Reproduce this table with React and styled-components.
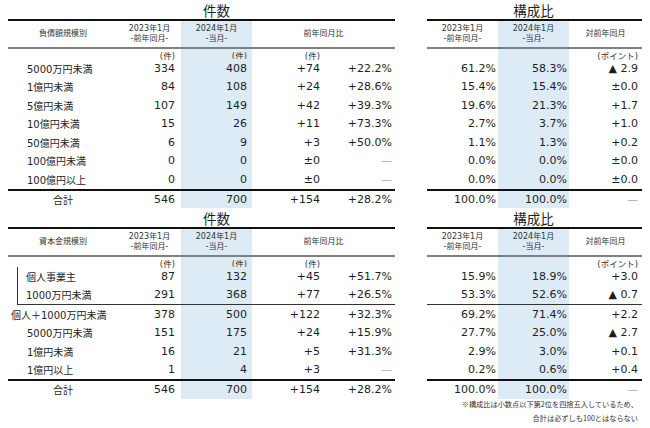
import styled, { createGlobalStyle } from 'styled-components';

const GlobalStyle = createGlobalStyle`
  body {
    margin: 0;
    background: #fff;
    font-family: "DejaVu Sans", "Noto Sans CJK JP", sans-serif;
    color: #1e1e1e;
  }
`;

const HL = '#ddebf7';

const Page = styled.div`
  width: 650px;
  padding-left: 8px;
  box-sizing: border-box;
`;

const Section = styled.div`
  display: flex;
  gap: 32px;
`;

const Table = styled.div`
  display: flex;
  flex-direction: column;
`;

const Row = styled.div`
  display: grid;
  grid-template-columns: ${p => p.$cols};
  height: ${p => p.$h}px;
`;

const TitleRow = styled(Row)`
  height: 19px;
`;

const HeaderRow = styled(Row)`
  height: 26px;
  border-top: 2px solid #111;
  border-bottom: 2px solid #808080;
`;

const TotalRow = styled(Row)`
  height: 17.5px;
  border-top: 2px solid #111;
`;

const Group = styled.div`
  margin-left: ${p => p.$indent}px;
  border-left: ${p => (p.$indent ? '1px solid #333' : 'none')};
  border-bottom: 1px solid #333;
`;

const Cell = styled.div`
  display: flex;
  align-items: center;
  justify-content: ${p =>
    p.$align === 'left' ? 'flex-start' : p.$align === 'center' ? 'center' : 'flex-end'};
  padding-right: ${p => p.$pr || 0}px;
  padding-left: ${p => p.$pl || 0}px;
  background: ${p => (p.$hl ? HL : 'transparent')};
  grid-column: ${p => (p.$span ? `span ${p.$span}` : 'auto')};
  white-space: nowrap;
  font-size: 11px;
  color: ${p => (p.$dash ? '#a8a8a8' : '#1e1e1e')};
`;

const Label = styled(Cell)`
  font-size: 10px;
`;

const Title = styled(Cell)`
  font-size: 13.5px;
  align-items: flex-start;
  padding-top: 4px;
  line-height: 15px;
  color: #1e1e1e;
`;

const HeadCell = styled(Cell)`
  flex-direction: column;
  justify-content: center;
  align-items: center;
  font-size: 8px;
  line-height: 10px;
  color: #333;
`;

const Unit = styled(Cell)`
  font-size: 8.5px;
  color: #333;
`;

const Note = styled.div`
  display: flex;
  flex-direction: column;
  align-items: flex-end;
  gap: 4px;
  padding-right: 4px;
  font-size: 7.2px;
  line-height: 10px;
  color: #333;
  font-family: "Noto Sans CJK JP", sans-serif;
`;

const LEFT = { cols: [110, 63, 71, 71, 72], pads: [0, 6, 5, 3, 3], hl: 2 };
const RIGHT = { cols: [71, 71, 73], pads: [2, 2, 4], hl: 1 };

const colsOf = (spec, shrink = 0) =>
  spec.cols.map((w, i) => `${i === 0 ? w - shrink : w}px`).join(' ');

const DataRow = ({ spec, label, values, indent = 0, shrink = 0 }) => {
  const offset = spec === LEFT ? 1 : 0;
  return (
    <Row $cols={colsOf(spec, shrink)} $h={18.5}>
      {spec === LEFT && (
        <Label $align="left" $pl={indent}>
          {label}
        </Label>
      )}
      {values.map((v, i) => (
        <Cell
          key={i}
          $pr={spec.pads[i + offset]}
          $hl={i + offset === spec.hl}
          $dash={v === '—'}
        >
          {v}
        </Cell>
      ))}
    </Row>
  );
};

const LeftTable = ({ head, rows, group, total }) => {
  const cols = colsOf(LEFT);
  return (
    <Table>
      <TitleRow $cols={cols}>
        <Cell />
        <Cell />
        <Title $align="center">件数</Title>
      </TitleRow>
      <HeaderRow $cols={cols}>
        <HeadCell>{head}</HeadCell>
        <HeadCell>
          <span>2023年1月</span>
          <span>-前年同月-</span>
        </HeadCell>
        <HeadCell $hl>
          <span>2024年1月</span>
          <span>-当月-</span>
        </HeadCell>
        <HeadCell $span={2}>前年同月比</HeadCell>
      </HeaderRow>
      <Row $cols={cols} $h={10}>
        <Cell />
        <Unit $pr={6}>(件)</Unit>
        <Unit $pr={5} $hl>(件)</Unit>
        <Unit $pr={3}>(件)</Unit>
        <Cell />
      </Row>
      {group && (
        <Group $indent={9}>
          {group.map(r => (
            <DataRow key={r[0]} spec={LEFT} label={r[0]} values={r.slice(1)} indent={8} shrink={10} />
          ))}
        </Group>
      )}
      {rows.map(r => (
        <DataRow key={r[0]} spec={LEFT} label={r[0]} values={r.slice(1)} indent={r[0].startsWith('個人＋') ? 3 : 19} />
      ))}
      <TotalRow $cols={cols}>
        <Label $align="center">合計</Label>
        {total.map((v, i) => (
          <Cell key={i} $pr={LEFT.pads[i + 1]} $hl={i + 1 === LEFT.hl}>
            {v}
          </Cell>
        ))}
      </TotalRow>
    </Table>
  );
};

const RightTable = ({ rows, group, total, note }) => {
  const cols = colsOf(RIGHT);
  return (
    <Table>
      <TitleRow $cols={cols}>
        <Cell />
        <Title $align="center">構成比</Title>
        <Cell />
      </TitleRow>
      <HeaderRow $cols={cols}>
        <HeadCell>
          <span>2023年1月</span>
          <span>-前年同月-</span>
        </HeadCell>
        <HeadCell $hl>
          <span>2024年1月</span>
          <span>-当月-</span>
        </HeadCell>
        <HeadCell>対前年同月</HeadCell>
      </HeaderRow>
      <Row $cols={cols} $h={10}>
        <Cell />
        <Cell $hl />
        <Unit $pr={4}>(ポイント)</Unit>
      </Row>
      {group && (
        <Group $indent={0}>
          {group.map((r, i) => (
            <DataRow key={i} spec={RIGHT} values={r} />
          ))}
        </Group>
      )}
      {rows.map((r, i) => (
        <DataRow key={i} spec={RIGHT} values={r} />
      ))}
      <TotalRow $cols={cols}>
        {total.map((v, i) => (
          <Cell key={i} $pr={RIGHT.pads[i]} $hl={i === RIGHT.hl} $dash={v === '—'}>
            {v}
          </Cell>
        ))}
      </TotalRow>
      {note && (
        <Note>
          <span>※構成比は小数点以下第2位を四捨五入しているため、</span>
          <span>合計は必ずしも100とはならない</span>
        </Note>
      )}
    </Table>
  );
};

const debtRows = [
  ['5000万円未満', '334', '408', '+74', '+22.2%'],
  ['1億円未満', '84', '108', '+24', '+28.6%'],
  ['5億円未満', '107', '149', '+42', '+39.3%'],
  ['10億円未満', '15', '26', '+11', '+73.3%'],
  ['50億円未満', '6', '9', '+3', '+50.0%'],
  ['100億円未満', '0', '0', '±0', '—'],
  ['100億円以上', '0', '0', '±0', '—'],
];

const debtShare = [
  ['61.2%', '58.3%', '▲ 2.9'],
  ['15.4%', '15.4%', '±0.0'],
  ['19.6%', '21.3%', '+1.7'],
  ['2.7%', '3.7%', '+1.0'],
  ['1.1%', '1.3%', '+0.2'],
  ['0.0%', '0.0%', '±0.0'],
  ['0.0%', '0.0%', '±0.0'],
];

const capGroup = [
  ['個人事業主', '87', '132', '+45', '+51.7%'],
  ['1000万円未満', '291', '368', '+77', '+26.5%'],
];

const capRows = [
  ['個人＋1000万円未満', '378', '500', '+122', '+32.3%'],
  ['5000万円未満', '151', '175', '+24', '+15.9%'],
  ['1億円未満', '16', '21', '+5', '+31.3%'],
  ['1億円以上', '1', '4', '+3', '—'],
];

const capShareGroup = [
  ['15.9%', '18.9%', '+3.0'],
  ['53.3%', '52.6%', '▲ 0.7'],
];

const capShare = [
  ['69.2%', '71.4%', '+2.2'],
  ['27.7%', '25.0%', '▲ 2.7'],
  ['2.9%', '3.0%', '+0.1'],
  ['0.2%', '0.6%', '+0.4'],
];

export default function App() {
  return (
    <Page>
      <GlobalStyle />
      <Section>
        <LeftTable head="負債額規模別" rows={debtRows} total={['546', '700', '+154', '+28.2%']} />
        <RightTable rows={debtShare} total={['100.0%', '100.0%', '—']} />
      </Section>
      <Section>
        <LeftTable
          head="資本金規模別"
          group={capGroup}
          rows={capRows}
          total={['546', '700', '+154', '+28.2%']}
        />
        <RightTable
          group={capShareGroup}
          rows={capShare}
          total={['100.0%', '100.0%', '—']}
          note
        />
      </Section>
    </Page>
  );
}
